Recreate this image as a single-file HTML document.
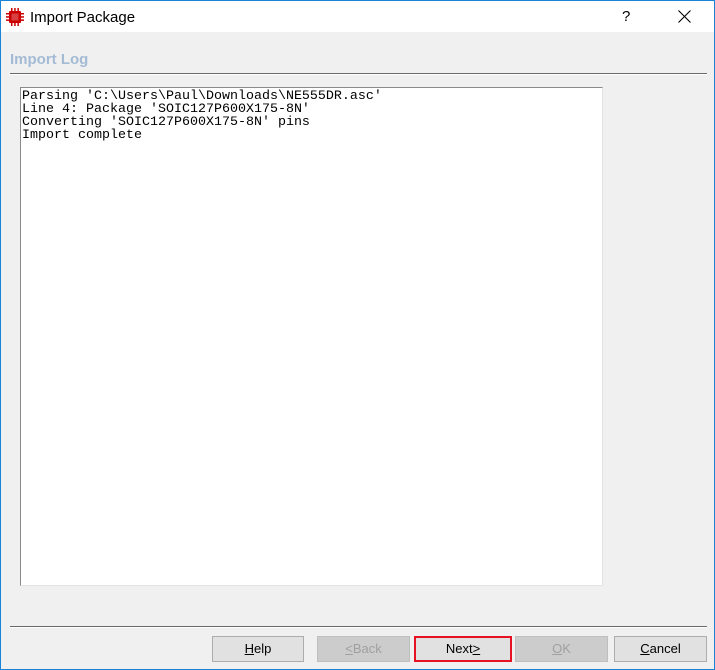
<!DOCTYPE html>
<html><head><style>
*{margin:0;padding:0;box-sizing:border-box}
body{width:715px;height:670px;overflow:hidden;background:#f0f0f0;font-family:"Liberation Sans",sans-serif;position:relative}
.win{position:absolute;left:0;top:0;width:715px;height:670px;border:1px solid #1883d7;background:#f0f0f0}
.title{position:absolute;left:0;top:0;width:713px;height:31px;background:#fff}
.title .t{position:absolute;left:29px;top:8px;font-size:15px;color:#000}
.abs{position:absolute}
.log{position:absolute;left:19px;top:86px;width:583px;height:499px;background:#fff;border:1px solid #8a8a8a;border-right-color:#e3e3e3;border-bottom-color:#e3e3e3;font-family:"Liberation Mono",monospace;font-size:13.33px;line-height:13px;padding:2px 1px;white-space:pre;color:#000}
.sep{position:absolute;left:9px;width:697px;height:2px;border-top:1px solid #6a6a6a;border-bottom:1px solid #fff}
.btn{position:absolute;top:635px;height:26px;background:#e1e1e1;border:1px solid #adadad;font-size:13px;text-align:center;line-height:24px;color:#000}
.dis{background:#cccccc;border-color:#bfbfbf;color:#a0a0a0}
</style></head><body>
<div class="win">
<div class="title">
<svg class="abs" style="left:5px;top:7px" width="18" height="18" viewBox="0 0 18 18">
<g fill="#c00"><rect x="3" y="3" width="12" height="12" rx="1"/>
<rect x="0" y="5" width="3" height="1.5"/><rect x="0" y="8.2" width="3" height="1.5"/><rect x="0" y="11.4" width="3" height="1.5"/>
<rect x="15" y="5" width="3" height="1.5"/><rect x="15" y="8.2" width="3" height="1.5"/><rect x="15" y="11.4" width="3" height="1.5"/>
<rect x="5" y="0" width="1.5" height="3"/><rect x="8.2" y="0" width="1.5" height="3"/><rect x="11.4" y="0" width="1.5" height="3"/>
<rect x="5" y="15" width="1.5" height="3"/><rect x="8.2" y="15" width="1.5" height="3"/><rect x="11.4" y="15" width="1.5" height="3"/></g>
<rect x="5.5" y="5.5" width="7" height="7" fill="#fff" opacity=".25"/></svg>
<div class="t">Import Package</div>
<div class="abs" style="left:621px;top:7px;font-size:15px">?</div>
<svg class="abs" style="left:677px;top:9px" width="13" height="13" viewBox="0 0 13 13"><path d="M0.5 0.5L12.5 12.5M12.5 0.5L0.5 12.5" stroke="#000" stroke-width="1.1"/></svg>
</div>
<div class="abs" style="left:9px;top:50px;font-size:15px;font-weight:bold;color:#a4bbd5">Import Log</div>
<div class="sep" style="top:72px"></div>
<div class="log">Parsing 'C:\Users\Paul\Downloads\NE555DR.asc'
Line 4: Package 'SOIC127P600X175-8N'
Converting 'SOIC127P600X175-8N' pins
Import complete</div>
<div class="sep" style="top:625px"></div>
<div class="btn" style="left:211px;width:92px"><u>H</u>elp</div>
<div class="btn dis" style="left:316px;width:93px"><u>&lt;</u>Back</div>
<div class="btn" style="left:413px;width:98px;border:2px solid #e81123;line-height:22px">Next<u>&gt;</u></div>
<div class="btn dis" style="left:514px;width:93px"><u>O</u>K</div>
<div class="btn" style="left:613px;width:93px"><u>C</u>ancel</div>
</div>
</body></html>
